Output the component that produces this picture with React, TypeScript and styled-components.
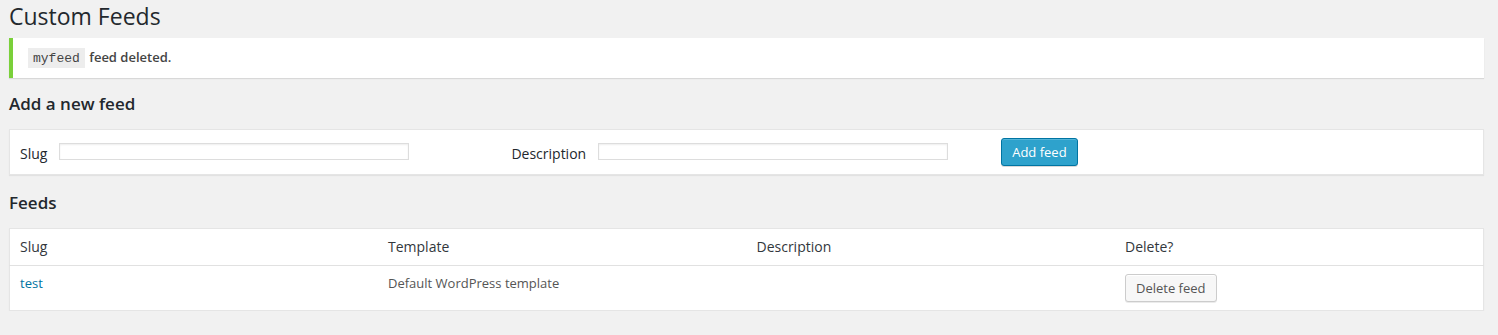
import styled, { createGlobalStyle } from 'styled-components'

const GlobalStyle = createGlobalStyle`
  body {
    margin: 0;
    background: #f1f1f1;
    color: #444;
    font-family: 'Open Sans', sans-serif;
    font-size: 13px;
    line-height: 1.4em;
  }
`
const Wrap = styled.div`
  padding: 0 14px 0 9px;
`
const Title = styled.h2`
  font-size: 23px;
  font-weight: 400;
  line-height: 29px;
  color: #23282d;
  margin: 0;
  padding: 2px 0 7px 0;
`
const Notice = styled.div`
  background: #fff;
  border-left: 4px solid #7ad03a;
  box-shadow: 0 1px 1px 0 rgba(0, 0, 0, 0.1);
  padding: 1px 12px;
`
const NoticeText = styled.p`
  margin: 6.5px 0;
  padding: 2px;
  font-size: 13px;
  font-weight: 600;
  line-height: 1.5;
  color: #444;
`
const Code = styled.code`
  background: rgba(0, 0, 0, 0.07);
  font-family: 'Liberation Mono', monospace;
  font-size: 13px;
  font-weight: 400;
  padding: 3px 5px 2px;
  margin: 0 1px;
  color: #444;
`
const SectionTitle = styled.h3<{ $top: number }>`
  font-size: 17px;
  font-weight: 600;
  color: #23282d;
  margin: 0;
  padding: ${(p) => p.$top}px 0 15px;
  line-height: 1.2;
`
const FormRow = styled.div`
  display: flex;
  align-items: center;
  padding: 8px 10px;
  background: #fff;
  border: 1px solid #e5e5e5;
  box-shadow: 0 1px 1px rgba(0, 0, 0, 0.06);
`
const Label = styled.label`
  font-size: 14px;
  color: #23282d;
  margin-right: 12px;
  padding-top: 4px;
`
const Input = styled.input<{ $gap: number }>`
  width: 350px;
  height: 17px;
  box-sizing: border-box;
  border: 1px solid #ddd;
  box-shadow: inset 0 1px 2px rgba(0, 0, 0, 0.07);
  background: #fff;
  margin: 0 ${(p) => p.$gap}px 0 0;
  padding: 0 4px;
  outline: none;
`
const Button = styled.button<{ $primary?: boolean }>`
  height: 28px;
  box-sizing: border-box;
  font-family: 'Open Sans', sans-serif;
  font-size: 13px;
  line-height: 26px;
  padding: 0 10px 1px;
  border-radius: 3px;
  border: 1px solid ${(p) => (p.$primary ? '#0074a2' : '#ccc')};
  background: ${(p) => (p.$primary ? '#2ea2cc' : '#f7f7f7')};
  color: ${(p) => (p.$primary ? '#fff' : '#555')};
  box-shadow: ${(p) =>
    p.$primary
      ? 'inset 0 1px 0 rgba(120, 200, 230, 0.5), 0 1px 0 rgba(0, 0, 0, 0.15)'
      : 'inset 0 1px 0 #fff, 0 1px 0 rgba(0, 0, 0, 0.08)'};
  cursor: pointer;
`
const Table = styled.table`
  width: 100%;
  border-collapse: collapse;
  table-layout: fixed;
  background: #fff;
  border: 1px solid #e5e5e5;
  box-shadow: 0 1px 1px rgba(0, 0, 0, 0.06);
`
const Th = styled.th`
  text-align: left;
  font-weight: 400;
  font-size: 14px;
  color: #32373c;
  padding: 8px 10px;
  line-height: 1.4em;
  height: 19.6px;
  border-bottom: 1px solid #e1e1e1;
`
const Td = styled.td`
  vertical-align: top;
  font-size: 13px;
  color: #555;
  padding: 8px 10px;
  line-height: 19px;
`
const Link = styled.a`
  color: #0074a2;
  text-decoration: none;
`

const feeds = [{ slug: 'test', template: 'Default WordPress template', description: '' }]

const App = () => (
  <>
    <GlobalStyle />
    <Wrap>
      <Title>Custom Feeds</Title>
      <Notice>
        <NoticeText>
          <Code>myfeed</Code> feed deleted.
        </NoticeText>
      </Notice>
      <SectionTitle $top={16}>Add a new feed</SectionTitle>
      <FormRow>
        <Label>Slug</Label>
        <Input $gap={102} />
        <Label>Description</Label>
        <Input $gap={53} />
        <Button $primary>Add feed</Button>
      </FormRow>
      <SectionTitle $top={18}>Feeds</SectionTitle>
      <Table>
        <thead>
          <tr>
            <Th>Slug</Th>
            <Th>Template</Th>
            <Th>Description</Th>
            <Th>Delete?</Th>
          </tr>
        </thead>
        <tbody>
          {feeds.map((f) => (
            <tr key={f.slug}>
              <Td>
                <Link href="#">{f.slug}</Link>
              </Td>
              <Td>{f.template}</Td>
              <Td>{f.description}</Td>
              <Td>
                <Button>Delete feed</Button>
              </Td>
            </tr>
          ))}
        </tbody>
      </Table>
    </Wrap>
  </>
)

export default App
